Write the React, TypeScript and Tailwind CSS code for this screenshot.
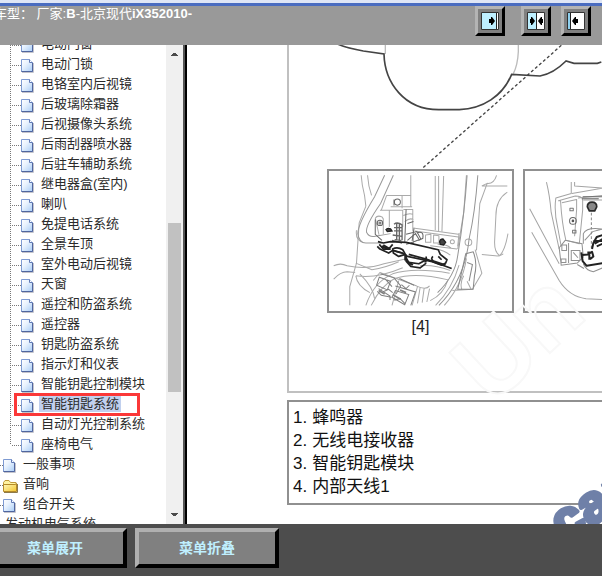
import React, { useState } from "react";

type Node = { title: string; level: 1 | 2 | 3; folder?: boolean };

const nodes: Node[] = [
  { title: "电动门窗", level: 3 },
  { title: "电动门锁", level: 3 },
  { title: "电铬室内后视镜", level: 3 },
  { title: "后玻璃除霜器", level: 3 },
  { title: "后视摄像头系统", level: 3 },
  { title: "后雨刮器喷水器", level: 3 },
  { title: "后驻车辅助系统", level: 3 },
  { title: "继电器盒(室内)", level: 3 },
  { title: "喇叭", level: 3 },
  { title: "免提电话系统", level: 3 },
  { title: "全景车顶", level: 3 },
  { title: "室外电动后视镜", level: 3 },
  { title: "天窗", level: 3 },
  { title: "遥控和防盗系统", level: 3 },
  { title: "遥控器", level: 3 },
  { title: "钥匙防盗系统", level: 3 },
  { title: "指示灯和仪表", level: 3 },
  { title: "智能钥匙控制模块", level: 3 },
  { title: "智能钥匙系统", level: 3 },
  { title: "自动灯光控制系统", level: 3 },
  { title: "座椅电气", level: 3 },
  { title: "一般事项", level: 2 },
  { title: "音响", level: 2, folder: true },
  { title: "组合开关", level: 2 },
  { title: "发动机电气系统", level: 1 },
];

const legend = ["蜂鸣器", "无线电接收器", "智能钥匙模块", "内部天线1"];

const PageIcon = () => (
  <svg width="14" height="14" viewBox="0 0 14 14" className="shrink-0">
    <defs>
      <linearGradient id="page" x1="0" y1="0" x2="1" y2="1">
        <stop offset="0" stopColor="#ffffff" />
        <stop offset="0.4" stopColor="#e8f2fe" />
        <stop offset="1" stopColor="#a9cdf6" />
      </linearGradient>
    </defs>
    <path d="M1 13.5h11.5V4" fill="none" stroke="#c4c4cc" />
    <path d="M.5.5h8l3 3v9H.5z" fill="url(#page)" stroke="#7d9ad2" />
    <path d="M11.500 4v8.500H.5" fill="none" stroke="#4f659e" />
    <path d="M8.500.5v3h3" fill="#fff" stroke="#6079b4" />
  </svg>
);

const FolderIcon = () => (
  <svg width="14" height="14" viewBox="0 0 14 14" className="shrink-0 overflow-visible">
    <defs>
      <linearGradient id="folder" x1="0" y1="0" x2="1" y2="1">
        <stop offset="0" stopColor="#fffbc4" />
        <stop offset="1" stopColor="#f3c52c" />
      </linearGradient>
    </defs>
    <path d="M.5 11V3.500L2 1.500h4L7.500 3.500h5.500v8" fill="#fff3a0" stroke="#c09a3c" />
    <path d="M.5 5.500h12l1 -1v8h-13z" fill="url(#folder)" stroke="#b58a28" />
    <path d="M1 13.500h13.500V5" fill="none" stroke="#8d7a4a" />
  </svg>
);

const Guide = ({ level, last }: { level: number; last: boolean }) =>
  level === 3 ? (
    <svg width="11" height="20" className="ml-[10px] shrink-0">
      <path d={last ? "M.5 0V12" : "M.5 0V20"} stroke="#777" strokeDasharray="1 1" />
      <path d="M2 12.500H11" stroke="#777" strokeDasharray="1 1" />
    </svg>
  ) : (
    <svg width="3" height="20" className="shrink-0">
      <path d="M0 12.500H3" stroke="#777" strokeDasharray="1 1" />
    </svg>
  );

const Arrow = ({ d }: { d: string }) => (
  <svg width="17" height="17" viewBox="0 0 17 17" className="shrink-0">
    <path d={d} fill="#4a4a4a" />
  </svg>
);

const Sidebar = () => {
  const [active, setActive] = useState<string>("智能钥匙系统");
  return (
    <aside className="flex w-[187px] shrink-0 border-r-2 border-black">
      <nav className="min-w-0 flex-1 overflow-hidden">
        <ul className="-mt-3 text-[13px] leading-5 text-[#2b2b2b]">
          {nodes.map(({ title, level, folder }, i) => (
            <li key={title} className="relative flex h-5 items-center whitespace-nowrap">
              {level > 1 && (
                <>
                  <Guide level={level} last={nodes[i + 1]?.level !== 3} />
                  <span className="mt-1.5 shrink-0">{folder ? <FolderIcon /> : <PageIcon />}</span>
                </>
              )}
              <a
                href="#"
                onClick={() => setActive(title)}
                className={`${level > 1 ? "ml-1" : "ml-[3px]"} ${
                  active === title ? "bg-[#c1d0ee]" : ""
                } px-0.5 leading-[17px]`}
              >
                {title}
              </a>
              {active === title && (
                <span className="pointer-events-none absolute top-0 left-[14px] z-10 h-[23px] w-[126px] border-3 border-[#fb3838]" />
              )}
            </li>
          ))}
        </ul>
      </nav>
      {/* scrollbar */}
      <div className="flex w-[17px] shrink-0 flex-col items-center bg-[#f0f0f0]">
        <Arrow d="M5 11h7v-1h-1v-1h-1v-1H7v1H6v1H5z" />
        <div className="flex w-full flex-1 flex-col items-center">
          <div className="h-[161px] shrink-0" />
          <div className="h-[169px] w-[13px] shrink-0 bg-[#c1c1c1]" />
        </div>
        <Arrow d="M5 6h7v1h-1v1h-1v1H7V8H6V7H5z" />
      </div>
      <div className="w-0.5 shrink-0 bg-[#555]" />
    </aside>
  );
};

const ToolButton = ({ label, children }: { label: string; children: React.ReactNode }) => (
  <button
    aria-label={label}
    className="flex size-[30px] items-center justify-center border-3 border-t-[#b4b4b4] border-r-black border-b-black border-l-[#b4b4b4] bg-[#808080]"
  >
    <svg width="18" height="18" viewBox="0 0 18 18">
      {children}
    </svg>
  </button>
);

const Header = () => (
  <header className="shrink-0">
    <div className="h-[3px] bg-[#dfe6f6]" />
    <div className="h-[3px] bg-[#4a6cc0]" />
    <div className="flex h-[39px] items-start justify-between bg-[#999] pr-[11px]">
      <h1 className="-ml-[6px] text-[13px] leading-4 whitespace-pre text-white">
        车型： 厂家:<b>B</b>-北京现代<b>iX352010-</b>
      </h1>
      <div className="flex">
        <ToolButton label="展开左侧">
          <path d="M.5.5h17v17H.5z" fill="#fff" stroke="#333" />
          <path d="M1 1h14v16H1z" fill="#bdefff" />
          <path d="M15.500 1v16" stroke="#222" />
          <path d="M8 7h2V5h1l3 4-3 4h-1v-2H8z" />
        </ToolButton>
        <div className="w-4" />
        <ToolButton label="左右平分">
          <path d="M.5.5h17v17H.5z" fill="#fff" stroke="#333" />
          <path d="M1 1h8v16H1z" fill="#bdefff" />
          <path d="M9.500 1v16" stroke="#222" />
          <path d="M3 7h1V5h1l3 4-3 4H4v-2H3z" />
          <path d="M16 7h-1V5h-1l-3 4 3 4h1v-2h1z" />
        </ToolButton>
        <div className="w-2.5" />
        <ToolButton label="展开右侧">
          <path d="M.5.5h17v17H.5z" fill="#fff" stroke="#333" />
          <path d="M1 1h2v16H1z" fill="#8fd0ee" />
          <path d="M3.500 1v16" stroke="#222" />
          <path d="M11 7H9V5H8L5 9l3 4h1v-2h2z" />
        </ToolButton>
      </div>
    </div>
  </header>
);

const CarOutline = () => (
  <svg width="315" height="124" viewBox="25 15 945 372" fill="none" className="block shrink-0">
    <path d="M314 15v27M713 15v20q-2 40-15 66" stroke="#bbb" strokeWidth="4" />
    <g stroke="#444" strokeWidth="5">
      <path d="M172 13q30 12 76 20l62 9c2 85 60 168 166 167h60c70-3 130-40 157-106l85 5q40-7 78-45l24 7h70l12-4" />
      <path d="M842 16L424 386" strokeWidth="4" strokeDasharray="9 7" />
    </g>
  </svg>
);

// inner antenna mounted below the console
const AntennaDrawing = () => (
  <svg viewBox="28 34 546 416" fill="none" className="block h-full w-full">
    <g stroke="#aaa" strokeWidth="3" strokeLinejoin="round">
      <path d="M124 46q2 30 10 60l4 32M143 46q2 32 12 60M138 138l-20 50-8 120-20 70v56" />
      <path d="M272 46v60M345 48v162M355 48v164M370 48l-5 166M438 46l-8 110-18 110" />
      <path d="M200 106h72v34M200 106l-16 44M212 140h64M180 150h68v50M208 150v50M250 148h28v66M250 166q16-8 28-4M254 184q14-12 26-6" />
      <path d="M166 174q6-10 20-4l4 6v60M166 174l14 62M246 106v38" />
      <path d="M484 78l16-8q20 2 28-24M484 78l76 0M560 96q-34 22-34 70l-4 80q0 30 14 38M562 220q-10 56-28 68M484 282l40 4q16 2 24-6M500 70l-22 60-10 140" />
      <path d="M284 204l130 18M284 212l130 18M280 222v30M316 224v22h16v-24zM340 224v24h16v-22zM416 218l-4 40M330 256l80 10M330 270q30-10 60 14M352 252q30 0 40 12" />
      <path d="M42 316q20-10 40 0q60 12 110-6l64-14M42 356q20-22 40-22l24 2M108 346q60 10 140-24M120 340q40 40 44 74M108 346q4 30 42 50" />
      <path d="M154 434q30-60 70-80 60-20 160 4M138 434q24-70 80-94 60-20 170-2M160 360l20-24 110 40M236 360l-20 74M292 378l-16 56M300 380l-8 48M312 382l-6 44M328 384l-8 40M288 376q30 14 40 0" />
      <path d="M346 434q50-50 70-120M372 434q54-60 66-140M330 420q40-20 52-60M396 390l60-4 28-48-20-70M424 386q-6-20 6-40M440 362l12 24" />
      <path d="M108 308l48 20q40-6 80-24M110 210q-4 30 20 36M300 316q40-4 90 14" />
      <circle cx="444" cy="246" r="10" />
      <circle cx="396" cy="244" r="6" />
    </g>
    <path d="M206 46q-20 50-50 110l-24 46q-6 40 14 36l72-8" stroke="#fff" strokeWidth="22" />
    <path d="M194 46l-30 64q-50 82-50 110 4 28 24 28h64M220 46l-38 84q-46 66-42 86 8 16 26 12l46-8" stroke="#999" strokeWidth="3" />
    <path d="M472 46q-8 110-26 190-12 120-90 198M440 46q-8 120-28 240-8 60-60 110" stroke="#949494" strokeWidth="3" />
    <path d="M436 280l-14 62-10 44 46 0 4-40q10-40-4-72zM440 306l16 6-10 50" stroke="#888" strokeWidth="3" />
    {/* connector block */}
    <g stroke="#808080" strokeWidth="3">
      <path d="M170 374l8-24 34 12-10 26zM182 340l40 12 20 24-14 24M176 384l34 22v12M188 394l18-8 12 10M216 410l10-20 40 12-12 30zM226 376l60 18-14 40M238 354l44 20M196 356l20 22M244 372l14 12 10-10M172 392l12 12 30 6M222 418l18-4 14 14" />
      <path d="M176 390l18 10M218 402l24 14M240 388l18 8" strokeWidth="5" />
    </g>
    <g stroke="#666" strokeWidth="3">
      <circle cx="232" cy="126" r="9" />
      <circle cx="180" cy="188" r="8" />
      <circle cx="180" cy="188" r="3" />
      <path d="M222 118v18M166 178v44l20 18M258 148l-4 96M262 190l18-6M282 202l-6 40" />
      <path d="M258 222l32-8 12 22-30 12-14 4M290 218q22-8 18 16l-12 6M262 240l24-20 10 16" />
      <path d="M222 192q10-8 24 2v46M222 202h24M222 212h24M218 224l28 4M224 238l20 2M230 190v50M238 192v50M216 240l30 8" strokeWidth="4" />
    </g>
    <path d="M198 208q4-6 14-2l4 6-14 2zM358 244q2-8 10-8l8 10-6 8-10-2z" fill="#444" stroke="#222" strokeWidth="4" />
    {/* antenna bar */}
    <path d="M190 246l26 6 26 0 110 18 6 14 22 12-8 18-12-2-110-22-36-12-40-16z" fill="#fff" />
    <g stroke="#222" strokeWidth="5" strokeLinejoin="round">
      <path d="M174 244l16 4 22-4 46 2 96 22 6 14 20 16-4 10-12 6-28-10-74-16-14-10-30-8-12 8-26-12-8-8" />
      <path d="M178 252l12 14 22 0M190 254l18 10 10-12M218 266q14-8 30 2l8 14-20 6-16-10zM224 272l22 6M258 282l0 20 14 16 28 4 18-14M258 292l8 14 30 4 22-12v-10M266 282l52 14M318 296l76 28M338 288q-8 8 2 14l36 12M354 288l10 10" />
      <path d="M256 284v16M266 306l12 8M186 258l20 8M316 296v10" strokeWidth="7" />
    </g>
  </svg>
);

const ModuleDrawing = () => (
  <svg viewBox="30 34 546 416" fill="none" className="block h-full w-full">
    <g stroke="#a4a4a4" strokeWidth="3" strokeLinejoin="round">
      <path d="M94 66q10 40 14 90l24 110M44 146l88 164M50 216l82 144q30 48 80 54l70 4" />
      <path d="M168 66v34l-46 14q-6 40 6 90l10 54M178 66v12l84 6M170 100l92-16M130 122l50-14q20 0 22 12v30l-10 100-40-10q-12-50-16-118zM140 128l44-10v30l-6 80M188 114l74-8M204 120h58" />
      <path d="M164 144h10v8h-10zM172 210h10v8h-10z" stroke="#777" />
    </g>
    <g stroke="#909090" strokeWidth="3">
      <path d="M132 262l18-22 50 10 4 40-18 18-48 6zM140 254h14v16h-14zM138 296h14v10h-14zM168 270h26v30h-26zM174 276l14 16M160 248v60M204 250v-30q10-20 54-14M208 240l24-26 30-8M204 310q8 20 30 24l28-12M186 312l20 12" />
    </g>
    <circle cx="173" cy="182" r="10" stroke="#666" strokeWidth="3" />
    <circle cx="173" cy="182" r="4" fill="#555" />
    <path d="M202 110l60 0M200 116h50" stroke="#666" strokeWidth="3" />
    <path d="M216 140q0-14 14-14t14 14l-6 12h-16z" fill="#888" stroke="#2a2a2a" strokeWidth="5" />
    <path d="M228 158v108" stroke="#888" strokeWidth="3" strokeDasharray="8 6" />
    <g stroke="#222" strokeWidth="6" strokeLinejoin="round">
      <path d="M262 224l-18 6-10 18-4 18M238 250l24-14M244 258l18-8M234 242h28" />
      <path d="M198 276l4 26 12 14 48-8M200 284l18-2 12-8 4 14-10 8M222 280v18M216 276h14" />
    </g>
  </svg>
);

const Legend = () => (
  <ol className="mt-[7px] w-[400px] shrink-0 border-2 border-[#909090] px-1 pt-1 pb-[5px] text-[17px] leading-[23px] text-[#111]">
    {legend.map((item, i) => (
      <li key={item} className="flex gap-[5px]">
        <span>{i + 1}.</span>
        <span>{item}</span>
      </li>
    ))}
  </ol>
);

const Content = () => (
  <main className="relative min-w-0 flex-1 overflow-hidden bg-white pl-[100px]">
    <figure className="h-[348px] w-[400px] border-b-2 border-l-2 border-[#c0c0c0]">
      <CarOutline />
      <div className="flex gap-[9px] pl-[38px]">
        <div className="w-[187px] shrink-0">
          <div className="h-36 border-2 border-[#909090]">
            <AntennaDrawing />
          </div>
          <figcaption className="mt-1 text-center text-base leading-5 text-[#222]">[4]</figcaption>
        </div>
        <div className="h-36 w-[187px] shrink-0 border-2 border-[#909090]">
          <ModuleDrawing />
        </div>
      </div>
    </figure>
    <Legend />
    {/* watermark */}
    <svg width="415" height="479" className="pointer-events-none absolute top-0 left-0 font-['Liberation_Sans']">
      <text
        transform="translate(305 362) rotate(-43)"
        fontSize="100"
        fontWeight="bold"
        fill="none"
        stroke="#f8f8f8"
        strokeWidth="2"
      >
        Un
      </text>
      <text
        transform="translate(377 498) rotate(-32)"
        fontSize="54"
        fontWeight="bold"
        fill="#6f80a8"
        stroke="#6f80a8"
        strokeWidth="4"
        strokeLinejoin="round"
      >
        car
      </text>
    </svg>
  </main>
);

const FooterButton = ({ children }: { children: React.ReactNode }) => (
  <button className="h-10 w-36 shrink-0 border-4 border-t-[#b0b0b0] border-r-black border-b-black border-l-[#b0b0b0] bg-[#808080] text-sm font-bold text-[#bfefff]">
    {children}
  </button>
);

const App: React.FC = () => {
  return (
    <div className="flex h-screen flex-col overflow-hidden bg-white pb-[7px] font-['Liberation_Sans','Noto_Sans_CJK_SC',sans-serif]">
      <Header />
      <div className="flex min-h-0 flex-1">
        <Sidebar />
        <Content />
      </div>
      <footer className="flex h-[52px] shrink-0 overflow-hidden bg-[#4d4d4d] pt-1">
        <div className="-ml-[17px] flex gap-2">
          <FooterButton>菜单展开</FooterButton>
          <FooterButton>菜单折叠</FooterButton>
        </div>
      </footer>
    </div>
  );
};

export default App;
